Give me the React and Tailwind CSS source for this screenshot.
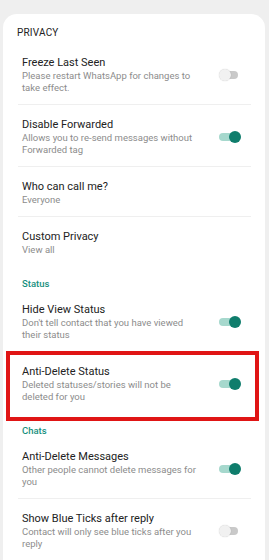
import React from "react";

function Toggle({ on }) {
  if (on) {
    return (
      <div className="relative w-[22px] h-[12px] shrink-0">
        <div className="absolute left-0 right-[3px] top-[2px] h-[8px] rounded-full bg-[#a6d8cd]" />
        <div className="absolute right-0 top-0 w-[12px] h-[12px] rounded-full bg-[#0f7d6c]" />
      </div>
    );
  }
  return (
    <div className="relative w-[22px] h-[12px] shrink-0">
      <div className="absolute left-[3px] right-[3px] top-[2px] h-[8px] rounded-full bg-[#c9c9c9]" />
      <div className="absolute left-0 top-0 w-[12px] h-[12px] rounded-full bg-[#f1f1f1] shadow-[0_0_1px_rgba(0,0,0,0.25)]" />
    </div>
  );
}

function Row({ title, sub, toggle, divider = true, pad = "pt-[12px] pb-[10px] pl-[19px] pr-[24px]" }) {
  return (
    <div>
      <div className={`flex items-center ${pad}`}>
        <div className="flex-1 min-w-0">
          <div className="text-[11px] leading-[15px] text-[#222222]">{title}</div>
          <div className="w-[182px] text-[9.5px] leading-[12px] text-[#8c8c8c]">{sub}</div>
        </div>
        {toggle !== undefined && <Toggle on={toggle} />}
      </div>
      {divider && <div className="ml-[15px] mr-[14px] h-px bg-[#efefef]" />}
    </div>
  );
}

function Heading({ children, className = "" }) {
  return (
    <div className={`pl-[19px] text-[9.5px] leading-[12px] font-medium text-[#17907e] ${className}`}>
      {children}
    </div>
  );
}

export default function App() {
  return (
    <div
      className="w-[269px] h-[560px] overflow-hidden bg-[#efefef] pt-[14px]"
      style={{ fontFamily: "Roboto, 'Noto Sans', sans-serif" }}
    >
      <div className="ml-[3px] mr-[4px] h-[600px] rounded-t-[14px] bg-white">
        <div className="pl-[14px] pt-[12px] pb-[3px] text-[10px] leading-[14px] text-[#222222] tracking-[0.2px]">
          PRIVACY
        </div>
        <Row title="Freeze Last Seen" sub="Please restart WhatsApp for changes to take effect." toggle={false} />
        <Row title="Disable Forwarded" sub="Allows you to re-send messages without Forwarded tag" toggle={true} />
        <Row title="Who can call me?" sub="Everyone" />
        <Row title="Custom Privacy" sub="View all" divider={false} />
        <Heading className="pt-[12px]">Status</Heading>
        <Row title="Hide View Status" sub="Don't tell contact that you have viewed their status" toggle={true} divider={false} />
        <div className="ml-[3px] mr-[6px] border-4 border-[#e01515]">
          <Row
            title="Anti-Delete Status"
            sub="Deleted statuses/stories will not be deleted for you"
            toggle={true}
            divider={false}
            pad="pt-[9px] pb-[14px] pl-[12px] pr-[14px]"
          />
        </div>
        <Heading className="pt-[4px]">Chats</Heading>
        <Row title="Anti-Delete Messages" sub="Other people cannot delete messages for you" toggle={true} />
        <Row title="Show Blue Ticks after reply" sub="Contact will only see blue ticks after you reply" toggle={false} />
      </div>
    </div>
  );
}
